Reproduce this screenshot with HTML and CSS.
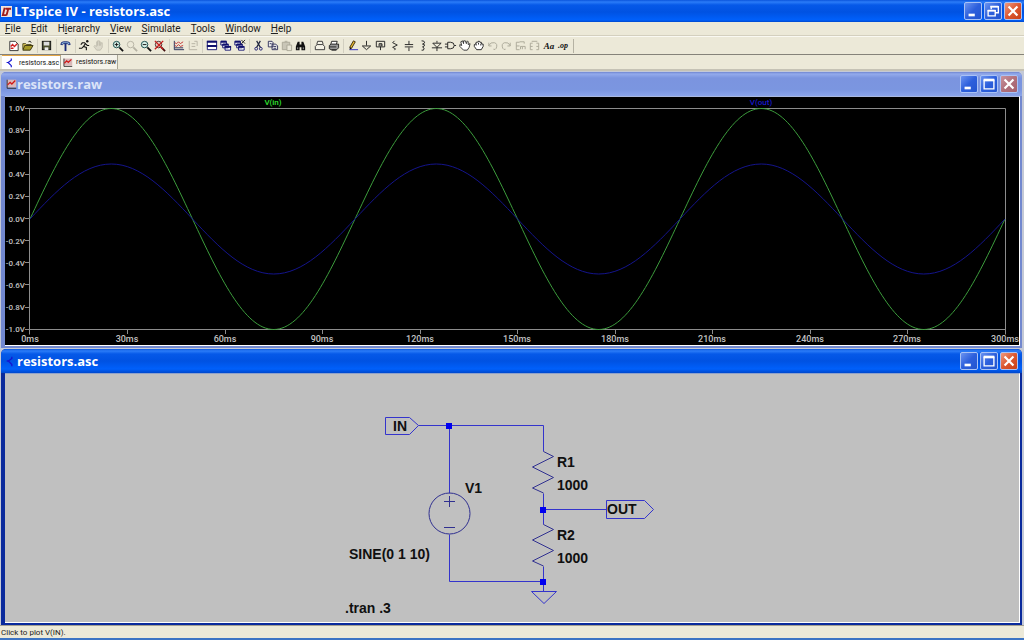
FILE: index.html
```
<!DOCTYPE html>
<html lang="en">
<head>
<meta charset="utf-8">
<title>LTspice IV - resistors.asc</title>
<link rel="stylesheet" href="styles.css">
</head>
<body>
<svg class="defs" aria-hidden="true">
  <symbol id="plot" viewBox="0 0 14 14"><rect x="2" y="2" width="11" height="9" fill="#d9b9b9"/><path d="M2.500 2v10H13" fill="none" stroke="#222"/><path d="M3 8l3-3 2 2 4-4" fill="none" stroke="#d01818" stroke-width="1.500"/></symbol>
  <symbol id="min" viewBox="0 0 18 18"><rect x="4" y="12" width="7" height="3" fill="#fff"/></symbol>
  <symbol id="max" viewBox="0 0 18 18"><path d="M3.500 4v10.500h11V4" fill="none" stroke="#fff" stroke-width="1.500"/><path d="M3 4.500h12" stroke="#fff" stroke-width="3"/></symbol>
  <symbol id="restore" viewBox="0 0 18 18"><path d="M7 7V4h8v7h-3M3.500 8.500h8v6h-8z" fill="none" stroke="#fff" stroke-width="1.500"/><path d="M6 4h9M3 8.500h9" stroke="#fff" stroke-width="2"/></symbol>
  <symbol id="close" viewBox="0 0 18 18"><path d="M4 4l10 10m0-10L4 14" stroke="#fff" stroke-width="2.500"/></symbol>
  <symbol id="sch" viewBox="0 0 14 14"><path d="M8 2v2L4 7l4 4v2M2 7h2" fill="none" stroke="#1414d0" stroke-width="1.500"/></symbol>
</svg>
<div class="app">
  <header class="title main-title">
    <svg class="logo" viewBox="0 0 12 12"><rect width="12" height="12" fill="#efe3e0"/><path d="M4 2L2 10h4M5 3h6M8 3L6 10" fill="none" stroke="#a01c1c" stroke-width="2"/></svg>
    <h1>LTspice IV - resistors.asc</h1>
    <div class="controls">
      <button aria-label="Minimize"><svg><use href="#min"/></svg></button>
      <button aria-label="Restore"><svg><use href="#restore"/></svg></button>
      <button class="close" aria-label="Close"><svg><use href="#close"/></svg></button>
    </div>
  </header>
  <nav class="menu">
    <button><u>F</u>ile</button><button><u>E</u>dit</button><button>H<u>i</u>erarchy</button><button><u>V</u>iew</button><button><u>S</u>imulate</button><button><u>T</u>ools</button><button><u>W</u>indow</button><button><u>H</u>elp</button>
  </nav>
  <div class="toolbar" role="toolbar" aria-label="Main">
    <div class="group">
      <button aria-label="New schematic"><svg viewBox="0 0 14 14"><path d="M3 2.500h6l3 3v7H3z" fill="#fff" stroke="#333"/><path d="M4 8l2-2 2 2 3-3M4 10h3" stroke="#d02020" stroke-width="1.500" fill="none"/></svg></button>
      <button aria-label="Open"><svg viewBox="0 0 14 14"><path d="M2 11V5h3l1 1h5v2" fill="#e6d060" stroke="#4b4518"/><path d="M2 12l2-5h9l-3 5z" fill="#a59a28" stroke="#3a3510"/><path d="M8 3q2-2 3 1" fill="none" stroke="#222"/></svg></button>
    </div>
    <div class="group"><button aria-label="Save"><svg viewBox="0 0 14 14"><rect x="2.500" y="2.500" width="9" height="9" fill="#4c5030" stroke="#111"/><rect x="4" y="3" width="6" height="4" fill="#ddd"/><rect x="5" y="9" width="4" height="3" fill="#eee"/></svg></button></div>
    <div class="group"><button aria-label="Control panel"><svg viewBox="0 0 14 14"><path d="M2 6q0-3 3-3h4q3 0 3 3h-2L9 5H5L4 6z" fill="#8fb6d8" stroke="#182878"/><path d="M7 5v8" stroke="#182878" stroke-width="2"/></svg></button></div>
    <div class="group">
      <button aria-label="Run"><svg viewBox="0 0 14 14"><circle cx="10" cy="2.500" r="1.300" fill="#111"/><path d="M4 4h3l1 1-2 3 3 1v3M6 8l-2 2H1M8 5l2 2h2M3 6l2-2" fill="none" stroke="#111" stroke-width="1.200"/></svg></button>
      <button aria-label="Halt" disabled><svg viewBox="0 0 14 14"><path d="M5 12L2 8l1-1 2 1V3h1v4V2h2v5V3h1v4l1-3h1v5l-2 3z" fill="#dcd9ca" stroke="#c2bfb0"/></svg></button>
    </div>
    <div class="group">
      <button aria-label="Zoom in"><svg viewBox="0 0 14 14"><circle cx="6" cy="6" r="3.500" fill="#d6eee6" stroke="#164848"/><path d="M9 9l4 4" stroke="#111" stroke-width="2"/><path d="M4 6h4M6 4v4" stroke="#111"/></svg></button>
      <button aria-label="Pan" disabled><svg viewBox="0 0 14 14"><circle cx="6" cy="6" r="3.500" fill="none" stroke="#b5b2a3"/><path d="M9 9l4 4" stroke="#b5b2a3" stroke-width="2"/></svg></button>
      <button aria-label="Zoom out"><svg viewBox="0 0 14 14"><circle cx="6" cy="6" r="3.500" fill="#d6eee6" stroke="#164848"/><path d="M9 9l4 4" stroke="#111" stroke-width="2"/><path d="M4 6h4" stroke="#111"/></svg></button>
      <button aria-label="Zoom fit"><svg viewBox="0 0 14 14"><circle cx="6" cy="6" r="3.500" fill="#e8d0c4" stroke="#442828"/><path d="M9 9l4 4" stroke="#411" stroke-width="2"/><path d="M2 2l9 9M11 2l-9 9" stroke="#c81c1c" stroke-width="1.400"/></svg></button>
    </div>
    <div class="group">
      <button aria-label="Autorange"><svg viewBox="0 0 14 14"><path d="M2.500 2v9.500H13M3 9.500h9" fill="none" stroke="#222a55"/><path d="M3 4l2 1 2-2 2 2 3-2M3 7l2 1 2-2 2 2 3-1" fill="none" stroke="#c03030"/></svg></button>
      <button aria-label="Pick traces" disabled><svg viewBox="0 0 14 14"><path d="M3.500 2v9.500H12M6 5h4M6 8h4M9 2.500h3v5" fill="none" stroke="#b5b2a3"/></svg></button>
    </div>
    <div class="group">
      <button aria-label="Tile"><svg viewBox="0 0 14 14"><path d="M2.500 2.500h10v9h-10z" fill="#fff" stroke="#10106e"/><path d="M2 3h11M2 7.500h11" stroke="#10106e" stroke-width="2"/></svg></button>
      <button aria-label="Cascade"><svg viewBox="0 0 14 14"><path d="M2 2.500h6v4H2zM4 5.500h6v4H4zM6.500 8h6v4h-6z" fill="#fff" stroke="#10106e"/><path d="M2 3h6M4 6h6M6 8.500h7" stroke="#10106e" stroke-width="2"/></svg></button>
      <button aria-label="Close all"><svg viewBox="0 0 14 14"><path d="M2 2.500h6v4H2zM4 5.500h6v4H4zM6 8h6v4H6z" fill="#fff" stroke="#10106e"/><path d="M2 3h6M4 6h6M6 8.500h6" stroke="#10106e" stroke-width="2"/><path d="M9 1l4 4m0-4L9 5" stroke="#222"/></svg></button>
    </div>
    <div class="group">
      <button aria-label="Cut"><svg viewBox="0 0 14 14"><path d="M5 2l4 7M9 2L5 9" stroke="#222840" stroke-width="1.300"/><circle cx="4.500" cy="10.500" r="1.500" fill="none" stroke="#202070"/><circle cx="9.500" cy="10.500" r="1.500" fill="none" stroke="#202070"/></svg></button>
      <button aria-label="Copy"><svg viewBox="0 0 14 14"><path d="M2.500 2.500h4l1 1v5h-5zM6.500 5.500h4l2 2v4h-6z" fill="#eee" stroke="#303058"/><path d="M4 5h2M8 8h3M8 10h3" stroke="#303058"/></svg></button>
      <button aria-label="Paste" disabled><svg viewBox="0 0 14 14"><path d="M2.500 3.500h8v8h-8z" fill="#c9c6b7" stroke="#aaa797"/><path d="M5 2.500h3M7.500 6.500h5v6h-5z" fill="#e8e5d6" stroke="#aaa797"/></svg></button>
      <button aria-label="Find"><svg viewBox="0 0 14 14"><path d="M4 3h2v3h2V3h2l2 5v4H8V9H6v3H2V8z" fill="#111"/><path d="M4 9v2M10 9v2" stroke="#aaa"/></svg></button>
    </div>
    <div class="group">
      <button aria-label="Print setup"><svg viewBox="0 0 14 14"><path d="M4 6l1-3.500h5L11 6M2.500 11.500V8l2-2h6l2 2v3.500z" fill="#f4f2e6" stroke="#333"/></svg></button>
      <button aria-label="Print"><svg viewBox="0 0 14 14"><path d="M4 6l1-3.500h6L10 6" fill="#fff" stroke="#222"/><path d="M2.500 10.500V7l2-1.500h8v4l-2 2h-6z" fill="#999" stroke="#222"/><path d="M3 8.500h7M5 12h5" stroke="#222"/></svg></button>
    </div>
    <div class="group">
      <button aria-label="Wire"><svg viewBox="0 0 14 14"><path d="M4 9l4-7 2 1-4 7z" fill="#e6b92e" stroke="#3a2a10"/><path d="M4 9v3l2-2z" fill="#111"/><path d="M4 11.500h9" stroke="#2828c0"/></svg></button>
      <button aria-label="Ground"><svg viewBox="0 0 14 14"><path d="M7 2v5M2.500 7.500h9l-4.500 4z" fill="none" stroke="#222"/></svg></button>
      <button aria-label="Label net"><svg viewBox="0 0 14 14"><path d="M2.500 2.500h9v6h-9zM7 8v4M5.500 8V5h3v3M6 6.500h3" fill="none" stroke="#222"/></svg></button>
      <button aria-label="Resistor"><svg viewBox="0 0 14 14"><path d="M7 2L5 4l5 2.500L5 9l3 1.500L7 12" fill="none" stroke="#222"/></svg></button>
      <button aria-label="Capacitor"><svg viewBox="0 0 14 14"><path d="M7.500 2v4M3 6h9M3 8.500h9M7.500 9v4" fill="none" stroke="#222"/></svg></button>
      <button aria-label="Inductor"><svg viewBox="0 0 14 14"><path d="M6 2q4 0 3 2.500l-2 1q3 0 2 2l-2 1q3 1 1 3.500H6" fill="none" stroke="#222"/></svg></button>
      <button aria-label="Diode"><svg viewBox="0 0 14 14"><path d="M7.500 2v2M3 4.500h9L7.500 9zM2 9.500h11M7.500 9v4" fill="none" stroke="#222"/></svg></button>
      <button aria-label="Component"><svg viewBox="0 0 14 14"><path d="M4 3.500h3q4 0 4 3.500t-4 3.500H4zM1 5.500h3M1 8.500h3M11 7h2" fill="none" stroke="#222"/></svg></button>
      <button aria-label="Move"><svg viewBox="0 0 14 14"><path d="M6 12L2 8V6l2 1-1-4 2-1 1 3V2h2l1 3 1-3 1 1v3l2-1-1 4-2 3z" fill="#fff" stroke="#333"/></svg></button>
      <button aria-label="Drag"><svg viewBox="0 0 14 14"><path d="M5 11.500L2.500 8V6L4 5.500l.5-2H6l.5-1H8l.5 1H10l.5 2H12V8l-2 3.500zM4.500 5v2M7 4v2M9.500 5v2" fill="#fff" stroke="#222"/></svg></button>
      <button aria-label="Undo" disabled><svg viewBox="0 0 14 14"><path d="M3 4v3.500h3M3 7q2-4 6-3t2 6q-1 2-3 1" fill="none" stroke="#aaa797"/></svg></button>
      <button aria-label="Redo" disabled><svg viewBox="0 0 14 14"><path d="M11 4v3.500H8M11 7Q9 3 5 4t-2 6q1 2 3 1" fill="none" stroke="#aaa797"/></svg></button>
      <button aria-label="Rotate" disabled><svg viewBox="0 0 14 14"><path d="M6 3.500H2.500v8H6M2.500 7.500H6M7 11V8h2v3M9 8h3v3M6 3h5v2" fill="none" stroke="#aaa797"/></svg></button>
      <button aria-label="Mirror" disabled><svg viewBox="0 0 14 14"><path d="M5 4.500H2.500v7H5M2.500 8H5M9 4.500h2.500v7H9M9 8h2.500M4 2.500h6" fill="none" stroke="#aaa797"/></svg></button>
      <button aria-label="Text" class="glyph">Aa</button>
      <button aria-label="SPICE directive" class="glyph small">.op</button>
    </div>
  </div>
  <div class="tabs" role="tablist">
    <button role="tab" aria-selected="true" class="tab active"><svg><use href="#sch"/></svg>resistors.asc</button>
    <button role="tab" aria-selected="false" class="tab"><svg><use href="#plot"/></svg>resistors.raw</button>
  </div>
  <main class="mdi">
    <section class="window inactive">
      <div class="title">
        <svg class="doc"><use href="#plot"/></svg><h2>resistors.raw</h2>
        <div class="controls">
          <button aria-label="Minimize"><svg><use href="#min"/></svg></button>
          <button aria-label="Maximize"><svg><use href="#max"/></svg></button>
          <button class="close" aria-label="Close"><svg><use href="#close"/></svg></button>
        </div>
      </div>
      <div class="pane plot">
        <svg viewBox="0 0 1014 248" role="img" aria-label="Waveforms">
          <defs>
            <path id="w" d="M0 0C26.500-56.600 51.900-110.500 81.250-110.500S136-56.600 162.500 0S214.400 110.500 243.750 110.500S298.500 56.600 325 0"/>
            <path id="h" d="M0 0C26.500-28.300 51.900-55 81.250-55S136-28.300 162.500 0S214.400 55 243.750 55S298.500 28.300 325 0"/>
          </defs>
          <path class="axis" d="M24.500 11.500h976v226M24.500 11.500v226M20 232.500h980.500M20 11.500h5M20 33.500h5M20 55.500h5M20 77.500h5M20 99.500h5M20 121.500h5M20 143.500h5M20 165.500h5M20 187.500h5M20 210.500h5M122.500 232v5M220.500 232v5M317.500 232v5M415.500 232v5M512.500 232v5M610.500 232v5M707.500 232v5M805.500 232v5M902.500 232v5"/>
          <g class="vin"><use href="#w" x="25" y="122"/><use href="#w" x="350" y="122"/><use href="#w" x="675" y="122"/></g>
          <g class="vout"><use href="#h" x="25" y="122"/><use href="#h" x="350" y="122"/><use href="#h" x="675" y="122"/></g>
          <g class="ylab"><text x="20" y="14">1.0V</text><text x="20" y="36">0.8V</text><text x="20" y="58">0.6V</text><text x="20" y="80">0.4V</text><text x="20" y="102">0.2V</text><text x="20" y="125">0.0V</text><text x="20" y="147">-0.2V</text><text x="20" y="169">-0.4V</text><text x="20" y="191">-0.6V</text><text x="20" y="213">-0.8V</text><text x="20" y="235">-1.0V</text></g>
          <g class="xlab"><text x="25" y="245">0ms</text><text x="122" y="245">30ms</text><text x="220" y="245">60ms</text><text x="317" y="245">90ms</text><text x="415" y="245">120ms</text><text x="512" y="245">150ms</text><text x="610" y="245">180ms</text><text x="707" y="245">210ms</text><text x="805" y="245">240ms</text><text x="902" y="245">270ms</text><text x="1000" y="245">300ms</text><text class="tin" x="268" y="8">V(in)</text><text class="tout" x="756" y="8">V(out)</text></g>
        </svg>
      </div>
    </section>
    <section class="window current">
      <div class="title">
        <svg class="doc"><use href="#sch"/></svg><h2>resistors.asc</h2>
        <div class="controls">
          <button aria-label="Minimize"><svg><use href="#min"/></svg></button>
          <button aria-label="Maximize"><svg><use href="#max"/></svg></button>
          <button class="close" aria-label="Close"><svg><use href="#close"/></svg></button>
        </div>
      </div>
      <div class="pane schematic">
        <svg viewBox="0 0 1014 248" role="img" aria-label="Schematic">
          <g class="wire">
            <path d="M380.500 43.500h24l9 8-9 9h-24zM413.500 51.500h125v26M444.500 51.500v68M444.500 160.500v47h94M538.500 119.500v31M538.500 135.500h63M538.500 192.500v25M601.500 126.500h38l9 9-9 9h-38zM526.500 217.500h25l-12.500 12z"/>
          </g>
          <g class="part">
            <path d="M538.500 77.500l10 5-21 10.500 21 10.500-21 10.500 11 5M538.500 150.500l10 5-21 10.500 21 10.500-21 10.500 11 5M439 127.500h11M444.500 122v11M439 153.500h11"/>
            <circle cx="444.500" cy="139.500" r="20.500"/>
          </g>
          <path class="node" d="M441 49h6v6h-6zM535 133h6v6h-6zM535 205h6v6h-6z"/>
          <g class="net"><text x="388" y="57">IN</text><text x="602" y="140">OUT</text><text x="460" y="119">V1</text><text x="552" y="93">R1</text><text x="552" y="116">1000</text><text x="552" y="166">R2</text><text x="552" y="189">1000</text><text x="344" y="185">SINE(0 1 10)</text><text x="340" y="239">.tran .3</text></g>
        </svg>
      </div>
    </section>
  </main>
  <footer class="status">Click to plot V(IN).</footer>
</div>
</body>
</html>
```
FILE: styles.css
```
* { box-sizing: border-box; }
body { margin: 0; font: 10px/12px Roboto, "Liberation Sans", sans-serif; color: #222; background: #ece9d8; }
button { border: 0; padding: 0; background: none; font: inherit; color: inherit; }
svg { display: block; }
.defs { width: 0; height: 0; position: absolute; }
.app { display: flex; flex-direction: column; min-height: 100vh; }

.title { display: flex; align-items: center; height: 24px; padding: 0 2px; color: #fff;
  background: linear-gradient(#0a55dc, #2b7cf8 2px, #0659e8 5px, #0052e2 12px, #0060fb 20px, #0048cc); }
.title h1, .title h2 { flex: 1; margin: 0; font: bold 13px/18px "Open Sans", "Noto Sans", sans-serif; }
.main-title { height: 22px; padding-left: 1px; gap: 2px; }
.logo { width: 11px; height: 11px; }
.doc { width: 12px; height: 12px; }
.controls { display: flex; gap: 2px; }
.controls button { width: 18px; height: 18px; border: 1px solid #a9c2f5; border-radius: 2px; background: linear-gradient(135deg, #6b93f0, #2c5fdc 50%, #2355cf); }
.controls .close { background: linear-gradient(135deg, #ee9a80, #dc5730 50%, #c84018); }
.controls svg { width: 16px; height: 16px; }

.menu { display: flex; gap: 10px; height: 14px; padding: 0 5px; align-items: center; border-bottom: 1px solid #d4d0bf; }
.toolbar { display: flex; height: 19px; padding: 0 7px; align-items: center; border-bottom: 1px solid #85837a; border-top: 1px solid #faf9f2; }
.group { display: flex; }
.group + .group { margin-left: 2px; border-left: 1px solid #d2cfc0; padding-left: 2px; }
.group:last-child { border-right: 1px solid #b5b2a3; padding-right: 3px; }
.toolbar button { width: 14px; height: 14px; }
.toolbar svg { width: 13px; height: 13px; }
.toolbar .glyph { font: italic bold 9px/14px "Liberation Serif", serif; color: #111; }
.toolbar .small { font-size: 8px; }

.tabs { display: flex; height: 16px; padding: 0 2px; border-bottom: 2px solid #c5c2b5; }
.tab { display: flex; align-items: center; gap: 3px; padding: 0 1px; font-size: 7px; color: #111; border-right: 1px solid #aaa797; background: #f5f3ea; }
.tab.active { background: #fff; border-top: 1px solid #e3a544; padding: 0 1px 0 3px; }
.tab svg { width: 11px; height: 11px; }

.mdi { flex: 1; display: flex; flex-direction: column; gap: 1px; padding: 1px 2px 0 1px; background: #c4c9d6; }
.window { padding: 0 2px 2px 4px; border-radius: 5px 5px 0 0; }
.inactive { background: #7288cf; }
.current { background: #0a2a9c; flex: 1; display: flex; flex-direction: column; }
.window .title { margin: 0 -2px 0 -4px; padding: 0 4px; border-radius: 5px 5px 0 0; }
.inactive .title { color: #dce4f8; background: linear-gradient(#6f85d0, #93aaec 2px, #7b94df 6px, #7b96e0 18px, #8aa4ea); }
.inactive .close { background: linear-gradient(135deg, #c9929c, #b0707c 50%, #a5626f); }
.pane { border: 1px solid #fff; border-width: 1px 1px 1px 0; }
.plot { background: #000; border-top-color: #a9b8e0; }
.schematic { flex: 1; background: #c0c0c0; border-top-color: #8fa2cc; }
.pane svg { width: 100%; height: auto; }
.axis { fill: none; stroke: #8c8c8c; }
.vin { fill: none; stroke: #3c9c3c; }
.vout { fill: none; stroke: #14148c; }
.plot text { font: 500 9px Roboto, "Liberation Sans", sans-serif; fill: #c0c0c0; }
.plot .ylab text { font-size: 8px; text-anchor: end; }
.xlab { text-anchor: middle; }
.plot .tin { font-size: 8px; fill: #30e030; }
.plot .tout { font-size: 8px; fill: #1818c8; }
.wire { fill: none; stroke: #3434cc; }
.part { fill: none; stroke: #303090; }
.node { fill: #0000f0; }
.net { font: bold 14px "Liberation Sans", Arial, sans-serif; fill: #101010; }

.status { padding: 2px 1px 0; font-size: 8px; line-height: 10px; border-top: 1px solid #a3a093; border-bottom: 2px solid #3c74c4; }
```
